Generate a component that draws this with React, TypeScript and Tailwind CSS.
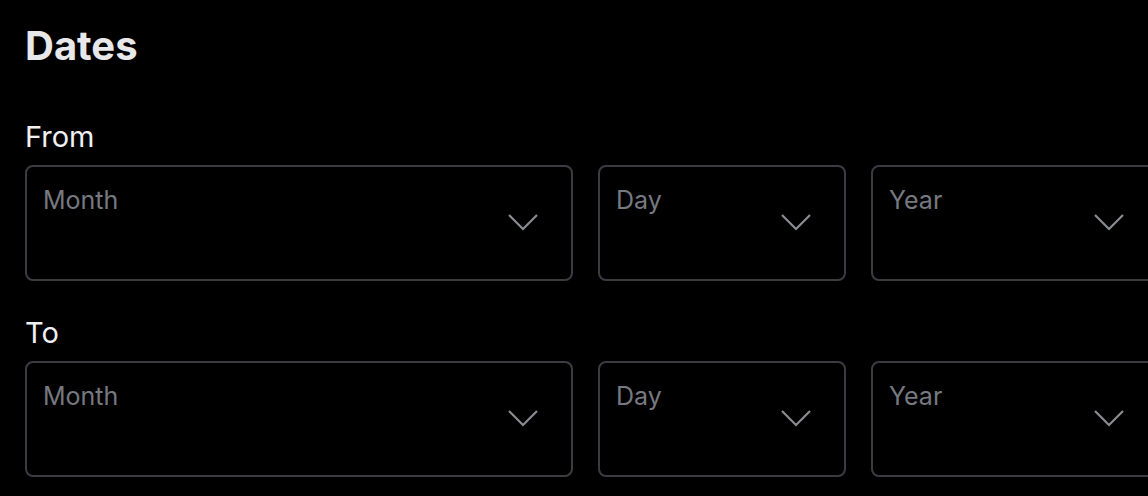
const font = { fontFamily: "Inter, 'Noto Sans', sans-serif" };

function Chevron() {
  return (
    <svg width="32" height="20" viewBox="0 0 32 20" fill="none" className="shrink-0">
      <path d="M2 3 L16 17 L30 3" stroke="#8a8c91" strokeWidth="2.2" />
    </svg>
  );
}

function Select({ placeholder, width }: { placeholder: string; width: string }) {
  return (
    <div
      className={`${width} shrink-0 h-[116px] rounded-[8px] border-2 border-[#3b3c40] flex justify-between pl-[16px] pr-[32px] pt-[17px]`}
    >
      <span className="text-[25px] leading-[32px] text-[#76797f]">{placeholder}</span>
      <div className="pt-[28px]">
        <Chevron />
      </div>
    </div>
  );
}

function DateRow({ label }: { label: string }) {
  return (
    <div className="flex flex-col">
      <div className="text-[29px] leading-[34px] text-[#f0f0f2] mb-[11px]">{label}</div>
      <div className="flex gap-[25px]">
        <Select placeholder="Month" width="w-[548px]" />
        <Select placeholder="Day" width="w-[248px]" />
        <Select placeholder="Year" width="w-[288px]" />
      </div>
    </div>
  );
}

export default function App() {
  return (
    <div className="w-[1148px] h-[496px] bg-black overflow-hidden pl-[25px] pt-[20px]" style={font}>
      <h1 className="text-[40px] leading-[52px] font-bold text-[#e8e8ea]">Dates</h1>
      <div className="flex flex-col gap-[35px] mt-[48px]">
        <DateRow label="From" />
        <DateRow label="To" />
      </div>
    </div>
  );
}
